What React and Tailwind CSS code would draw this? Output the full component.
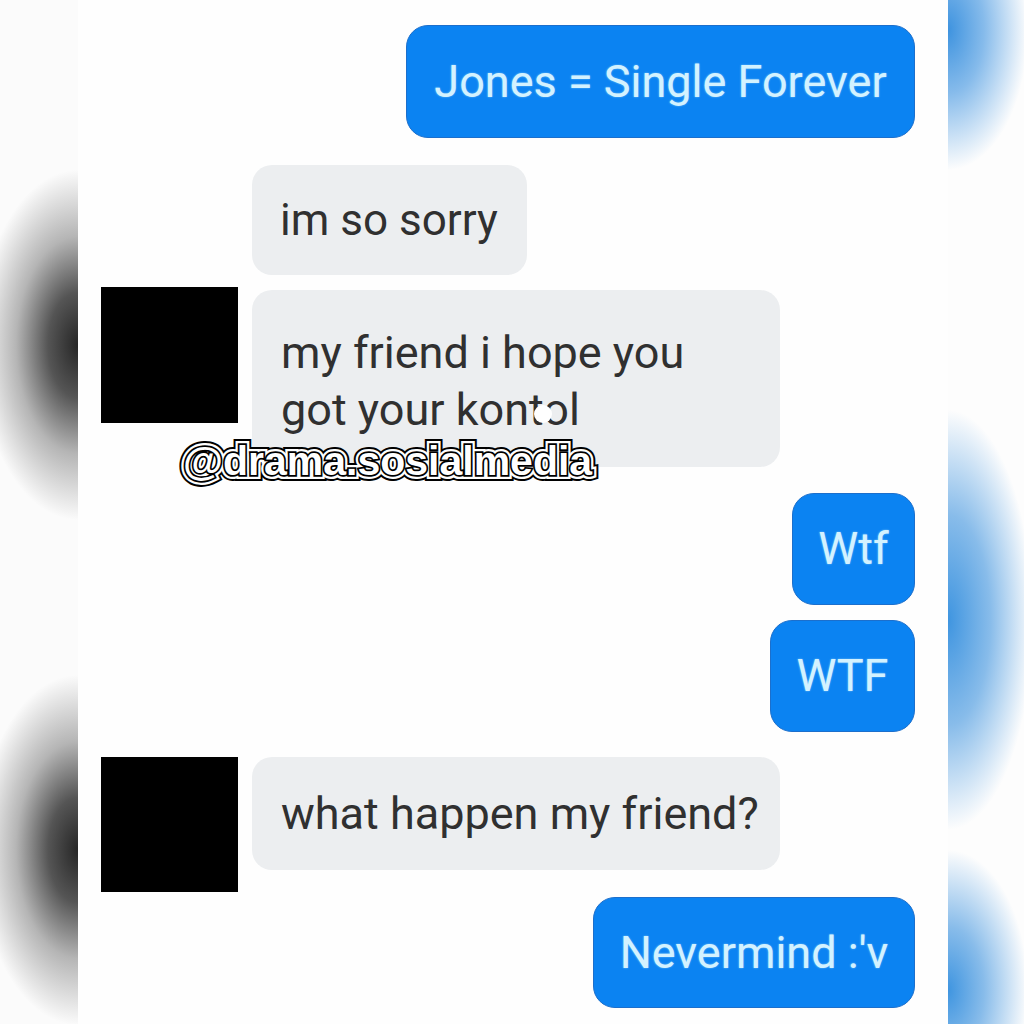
import React from "react";

const font = { fontFamily: "Roboto, 'Noto Sans', sans-serif" };

function Blue({ children, w, h, cls = "" }) {
  return (
    <div className={`flex justify-end ${cls}`}>
      <div
        className={`flex items-center justify-center whitespace-nowrap rounded-[22px] bg-[#0b83f2] border border-[#1c6fcc] text-[#d3f2ff] text-[45px] ${w} ${h} [text-shadow:0_0_2px_rgba(200,240,255,0.6)]`}
      >
        {children}
      </div>
    </div>
  );
}

function Avatar({ h }) {
  return <div className={`w-[137px] ${h} bg-black shrink-0`} />;
}

export default function App() {
  return (
    <div className="w-[1024px] h-[1024px] flex overflow-hidden bg-white" style={font}>
      {/* left blurred strip */}
      <div className="w-[78px] h-full shrink-0 bg-[#fbfbfb] bg-[radial-gradient(ellipse_100px_175px_at_78px_345px,#262626_0%,#555_30%,#b5b5b5_62%,rgba(250,250,250,0)_100%),radial-gradient(ellipse_100px_175px_at_78px_850px,#262626_0%,#555_30%,#b5b5b5_62%,rgba(250,250,250,0)_100%)]" />

      {/* main */}
      <div className="relative w-[870px] h-full shrink-0 bg-[#fefefe] flex flex-col pt-[25px] pl-[23px] pr-[33px]">
        <Blue w="w-[509px]" h="h-[113px]">Jones = Single Forever</Blue>

        <div className="mt-[27px] pl-[151px] flex">
          <div className="h-[110px] w-[275px] whitespace-nowrap rounded-[20px] bg-[#eceef0] flex items-center px-[28px] text-[44px] text-[#303030]">
            im so sorry
          </div>
        </div>

        <div className="mt-[12px] flex gap-[14px]">
          <Avatar h="h-[136px]" />
          <div className="mt-[3px] h-[177px] w-[528px] whitespace-nowrap rounded-[20px] bg-[#eceef0] px-[29px] pt-[34px] text-[45px] leading-[57px] text-[#303030]">
            <div>my friend i hope you</div>
            <div>
              got your kon
              <span className="relative">
                to
                <span className="absolute left-[5px] top-[22px] w-[18px] h-[18px] rounded-full bg-white" />
              </span>
              l
            </div>
          </div>
        </div>

        <Blue cls="mt-[26px]" w="w-[123px]" h="h-[112px]">Wtf</Blue>
        <Blue cls="mt-[15px]" w="w-[145px]" h="h-[112px]">WTF</Blue>

        <div className="mt-[25px] flex gap-[14px]">
          <Avatar h="h-[135px]" />
          <div className="h-[113px] w-[528px] whitespace-nowrap rounded-[20px] bg-[#eceef0] flex items-center px-[29px] text-[45px] text-[#303030]">
            what happen my friend?
          </div>
        </div>

        <Blue cls="mt-[5px]" w="w-[322px]" h="h-[111px]">Nevermind :'v</Blue>

        {/* watermark */}
        <div
          className="absolute left-[105px] top-[441px] grid text-[41px] font-bold leading-none whitespace-nowrap"
          style={{ fontFamily: "'Liberation Sans', Arial, sans-serif" }}
        >
          <span className="[grid-area:1/1] text-black [-webkit-text-stroke:12px_black]">@drama.sosialmedia</span>
          <span className="[grid-area:1/1] text-white [-webkit-text-stroke:8px_white]">@drama.sosialmedia</span>
          <span className="[grid-area:1/1] text-white [-webkit-text-stroke:3.5px_black] [paint-order:stroke_fill]">@drama.sosialmedia</span>
        </div>
      </div>

      {/* right blurred strip */}
      <div className="w-[76px] h-full shrink-0 bg-[#fdfdfd] bg-[radial-gradient(ellipse_80px_140px_at_0px_30px,#3e93df_0%,#86bbeb_45%,rgba(255,255,255,0)_100%),radial-gradient(ellipse_85px_210px_at_0px_620px,#3f95e0_0%,#88bcea_50%,rgba(255,255,255,0)_100%),radial-gradient(ellipse_80px_140px_at_0px_990px,#3f95e0_0%,#88bcea_45%,rgba(255,255,255,0)_100%)]" />
    </div>
  );
}
